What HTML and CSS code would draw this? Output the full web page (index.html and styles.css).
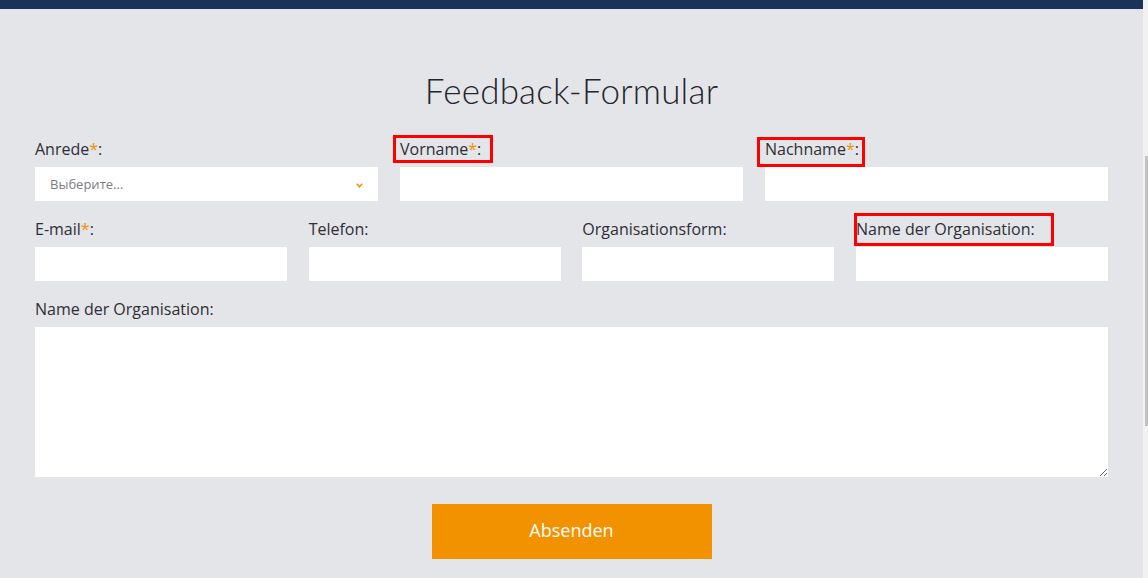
FILE: index.html
```html
<!DOCTYPE html>
<html lang="de">
<head>
<meta charset="utf-8">
<title>Feedback-Formular</title>
<link rel="stylesheet" href="styles.css">
</head>
<body>
<div class="page">
  <div class="main">
    <div class="topbar"></div>
    <div class="content">
      <h1 class="title">Feedback-Formular</h1>
      <div class="row cols3">
        <div class="field">
          <label class="label">Anrede<span class="req">*</span>:</label>
          <div class="select">
            <span class="placeholder">Выберите...</span>
            <svg class="chev" width="7" height="5" viewBox="0 0 7 5"><polyline points="0.8,0.8 3.5,3.8 6.2,0.8" fill="none" stroke="#f39200" stroke-width="1.6"/></svg>
          </div>
        </div>
        <div class="field">
          <label class="label">Vorname<span class="req">*</span>:<span class="mark mark-vorname"></span></label>
          <input class="input" type="text">
        </div>
        <div class="field">
          <label class="label">Nachname<span class="req">*</span>:<span class="mark mark-nachname"></span></label>
          <input class="input" type="text">
        </div>
      </div>
      <div class="row cols4">
        <div class="field">
          <label class="label">E-mail<span class="req">*</span>:</label>
          <input class="input" type="text">
        </div>
        <div class="field">
          <label class="label">Telefon:</label>
          <input class="input" type="text">
        </div>
        <div class="field">
          <label class="label">Organisationsform:</label>
          <input class="input" type="text">
        </div>
        <div class="field">
          <label class="label">Name der Organisation:<span class="mark mark-org"></span></label>
          <input class="input" type="text">
        </div>
      </div>
      <div class="field">
        <label class="label">Name der Organisation:</label>
        <textarea class="textarea"></textarea>
      </div>
      <div class="actions">
        <button class="submit" type="button">Absenden</button>
      </div>
    </div>
  </div>
  <div class="scrollbar"><div class="thumb"></div></div>
</div>
</body>
</html>
```

FILE: styles.css
```css
html, body {
  margin: 0;
  padding: 0;
  height: 100%;
  overflow: hidden;
}
body {
  background: #e4e5e9;
  font-family: "Open Sans", "DejaVu Sans", sans-serif;
  color: #2e2e35;
}
.page {
  display: flex;
  height: 578px;
}
.main {
  flex: 1;
  min-width: 0;
}
.topbar {
  height: 9px;
  background: #1b335c;
}
.content {
  padding: 60px 35px 0 35px;
}
.title {
  margin: 0 0 28px 0;
  text-align: center;
  font-family: "Lato", "Open Sans", sans-serif;
  font-weight: 300;
  font-size: 35px;
  line-height: 42px;
  color: #25252c;
  letter-spacing: 0.2px;
}
.row {
  display: grid;
  margin-bottom: 18px;
}
.cols3 {
  grid-template-columns: repeat(3, 1fr);
  column-gap: 22px;
}
.cols4 {
  grid-template-columns: repeat(4, 1fr);
  column-gap: 21.67px;
}
.field {
  display: flex;
  flex-direction: column;
  min-width: 0;
}
.label {
  position: relative;
  display: block;
  font-size: 16px;
  line-height: 20px;
  margin-bottom: 8px;
  white-space: nowrap;
}
.req {
  color: #f39200;
}
.mark {
  position: absolute;
  border: 3px solid #ff0000;
  box-sizing: border-box;
}
.mark-vorname {
  left: -7px;
  top: -4px;
  width: 100px;
  height: 28px;
}
.mark-nachname {
  left: -8px;
  top: -2px;
  width: 108px;
  height: 30px;
}
.mark-org {
  left: -2px;
  top: -6px;
  width: 200px;
  height: 33px;
}
.input, .select {
  display: block;
  box-sizing: border-box;
  width: 100%;
  height: 34px;
  border: 0;
  margin: 0;
  background: #ffffff;
  outline: none;
}
.select {
  display: flex;
  align-items: center;
  justify-content: space-between;
  padding: 0 15px 0 15px;
}
.placeholder {
  font-size: 13px;
  color: #7b7d82;
}
.chev {
  display: block;
  margin-top: 2px;
}
.textarea {
  display: block;
  box-sizing: border-box;
  width: 100%;
  height: 150px;
  border: 0;
  margin: 0;
  background: #ffffff;
  resize: both;
  outline: none;
}
.actions {
  display: flex;
  justify-content: center;
  padding-top: 27px;
}
.submit {
  width: 280px;
  height: 55px;
  border: 0;
  padding: 0 0 4px 0;
  background: #f39200;
  color: #ffffff;
  font-family: "Open Sans", sans-serif;
  font-size: 18px;
  cursor: pointer;
}
.scrollbar {
  width: 5px;
  background: #f1f1f1;
  flex: none;
}
.thumb {
  margin: 156px 0 0 2px;
  width: 3px;
  height: 270px;
  background: #c1c1c1;
}
```
